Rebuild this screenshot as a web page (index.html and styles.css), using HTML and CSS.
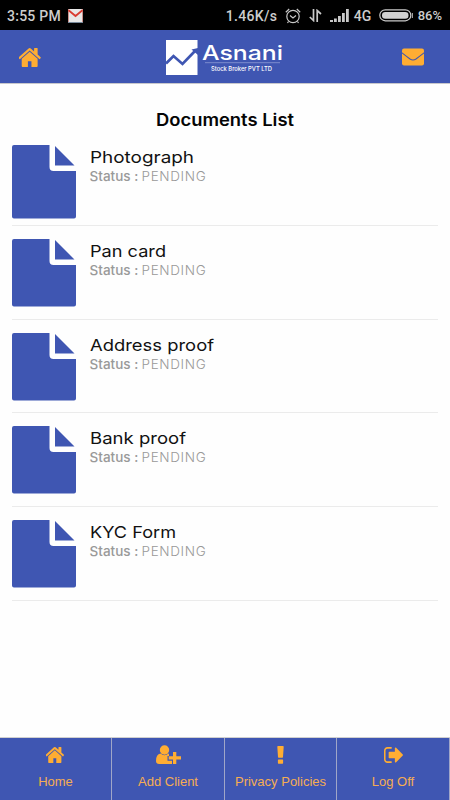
FILE: index.html
```html
<!DOCTYPE html>
<html lang="en">
<head>
<meta charset="utf-8">
<title>Documents List</title>
<link rel="stylesheet" href="styles.css">
</head>
<body>
<svg width="0" height="0" class="defs">
  <symbol id="home" viewBox="60 253 1664 1283" preserveAspectRatio="none"><path d="M1408 992v480q0 26-19 45t-45 19h-384v-384h-256v384h-384q-26 0-45-19t-19-45v-480q0-1 .5-3t.5-3l575-474 575 474q1 2 1 6zm223-69l-62 74q-8 9-21 11h-3q-13 0-21-7l-692-577-692 577q-12 8-24 7-13-2-21-11l-62-74q-8-10-7-23.5t11-21.5l719-599q32-26 76-26t76 26l244 204v-195q0-14 9-23t23-9h192q14 0 23 9t9 23v408l219 182q10 8 11 21.5t-7 23.5z"/></symbol>
  <symbol id="file-tall" viewBox="0 0 64 74"><path d="M2 0H37.500V22Q37.500 26 41.500 26H64V71.500Q64 73.500 62 73.500H2Q0 73.500 0 71.500V2Q0 0 2 0ZM43 1L62.500 20.500H43Z"/></symbol>
  <symbol id="file" viewBox="0 0 64 68"><path d="M2 0H37.500V22Q37.500 26 41.500 26H64V65.500Q64 67.500 62 67.500H2Q0 67.500 0 65.500V2Q0 0 2 0ZM43 1L62.500 20.500H43Z"/></symbol>
</svg>
<div class="status">
  <span class="time">3:55 PM</span>
  <svg class="gmail" width="15" height="14" viewBox="0 0 15 14"><path fill="#e8e8e8" d="M0 0h15v14H0z"/><path d="M.5 0v13M14.500 0v13" stroke="#c98f8b"/><path d="M.5 1.200 7.500 7l7-5.800" fill="none" stroke="#d93c31" stroke-width="1.900"/><path d="M0 13.500h15" stroke="#789"/></svg>
  <span class="speed">1.46K/s</span>
  <svg class="alarm" width="16" height="16" viewBox="0 0 16 16" fill="none" stroke="#c9c9c9" stroke-width="1.200"><circle cx="8" cy="8.500" r="6.200"/><path d="M.8 4.200 4.200 1M15.200 4.200 11.800 1M5 7.500l3 2.500 3-2.500M3.500 13.500 2.500 15M12.500 13.500l1 1.500"/></svg>
  <svg class="arrows" width="13" height="13" viewBox="0 0 13 13" fill="none" stroke="#c9c9c9" stroke-width="1.700"><path d="M4.500 0v11.500L.8 8M8.200 13V1.500L12 5"/></svg>
  <svg class="signal" width="19" height="13" viewBox="0 0 19 13" fill="#c9c9c9"><path d="M0 11h3v2H0zM4 9.500h2.800V13H4zM8 7h2.800v6H8zM12 4h2.800v9H12zM16 0h2.800v13H16z"/></svg>
  <span class="net">4G</span>
  <svg class="battery" width="34" height="13" viewBox="0 0 34 13"><rect x=".8" y=".8" width="31" height="11" rx="5.500" fill="none" stroke="#c9c9c9" stroke-width="1.200"/><path d="M33.300 4v5" stroke="#c9c9c9"/><rect x="3" y="3" width="26.500" height="6.700" rx="3.300" fill="#d2d2d2"/></svg>
  <span class="pct">86%</span>
</div>
<header>
  <svg class="head-home" width="23" height="19"><use href="#home"/></svg>
  <svg class="logo" width="120" height="36" viewBox="0 0 120 36">
    <path fill="#fff" d="M0 0h31.500v35H0z"/>
    <path d="M0 23.500 7.500 16l9 8L29 11" fill="none" stroke="#3f56b2" stroke-width="2.700"/>
    <path fill="#3f56b2" d="M25.500 9.500 32 8v7z"/>
    <text class="brand" x="36" y="19.500" textLength="81" lengthAdjust="spacingAndGlyphs">Asnani</text>
    <path d="M39 22.700h75" stroke="#97a3da" stroke-width=".7"/>
    <text class="tagline" x="45" y="30.500" textLength="61" lengthAdjust="spacingAndGlyphs">Stock Broker PVT LTD</text>
  </svg>
  <svg class="mail" width="22" height="18" viewBox="0 0 22 18"><rect y=".5" width="22" height="17" rx="2" fill="#ffad33"/><path d="M-.5 4.500Q4 8 8 11q3 2 6 0 4-3 8.500-6.500" fill="none" stroke="#3f56b2" stroke-width="1.100"/></svg>
</header>
<main>
  <h1><svg width="140" height="26"><text x="0" y="19" textLength="138" lengthAdjust="spacingAndGlyphs">Documents List</text></svg></h1>
  <ul>
    <li><svg class="file tall"><use href="#file-tall"/></svg><div><svg class="name" width="130" height="20"><text x="0" y="16" textLength="104" lengthAdjust="spacingAndGlyphs">Photograph</text></svg><p><b>Status :</b> <span>PENDING</span></p></div></li>
    <li><svg class="file"><use href="#file"/></svg><div><svg class="name" width="130" height="20"><text x="0" y="16" textLength="76" lengthAdjust="spacingAndGlyphs">Pan card</text></svg><p><b>Status :</b> <span>PENDING</span></p></div></li>
    <li><svg class="file"><use href="#file"/></svg><div><svg class="name" width="130" height="20"><text x="0" y="16" textLength="124" lengthAdjust="spacingAndGlyphs">Address proof</text></svg><p><b>Status :</b> <span>PENDING</span></p></div></li>
    <li><svg class="file"><use href="#file"/></svg><div><svg class="name" width="130" height="20"><text x="0" y="16" textLength="96" lengthAdjust="spacingAndGlyphs">Bank proof</text></svg><p><b>Status :</b> <span>PENDING</span></p></div></li>
    <li><svg class="file"><use href="#file"/></svg><div><svg class="name" width="130" height="20"><text x="0" y="16" textLength="86" lengthAdjust="spacingAndGlyphs">KYC Form</text></svg><p><b>Status :</b> <span>PENDING</span></p></div></li>
  </ul>
</main>
<nav>
  <a><svg width="19" height="16"><use href="#home"/></svg><span>Home</span></a>
  <a><svg width="25" height="20" viewBox="0 0 25 20"><circle cx="8.500" cy="5" r="4.700"/><path d="M4.500 8.500Q8.500 12 12.500 8.500L13 9v2h-1.500v4.700H16V19H3Q0 19 0 16 0 9 4.500 8.500ZM17 7h3.300v4.200H25v3.300h-4.700V19H17v-4.500h-4.300v-3.300H17z"/></svg><span>Add Client</span></a>
  <a><svg width="7" height="18" viewBox="0 0 7 18"><path d="M1 0h5q.7 0 .7.700L6 11q0 .7-.7.700H1.700Q1 11.700 1 11L.3.700Q.3 0 1 0zM1.500 13.500h4q.6 0 .6.600v3q0 .7-.6.700h-4q-.6 0-.6-.7v-3q0-.6.6-.6z"/></svg><span>Privacy Policies</span></a>
  <a><svg width="19" height="16" viewBox="64 250 1568 1290" preserveAspectRatio="none"><path d="M704 1440q0 4 1 20t.5 26.500-3 23.500-10 19.500-20.500 6.500h-320q-119 0-203.500-84.500t-84.500-203.500v-704q0-119 84.500-203.500t203.500-84.500h320q13 0 22.500 9.500t9.500 22.500q0 4 1 20t.5 26.500-3 23.500-10 19.500-20.500 6.500h-320q-66 0-113 47t-47 113v704q0 66 47 113t113 47h312l11.500 1 11.500 3 8 5.500 7 9 2 13.500zm928-544q0 26-19 45l-544 544q-19 19-45 19t-45-19-19-45v-288h-448q-26 0-45-19t-19-45v-384q0-26 19-45t45-19h448v-288q0-26 19-45t45-19 45 19l544 544q19 19 19 45z"/></svg><span>Log Off</span></a>
</nav>
</body>
</html>
```
FILE: styles.css
```css
* { box-sizing: border-box; }
body {
  margin: 0;
  width: 450px;
  height: 800px;
  display: flex;
  flex-direction: column;
  overflow: hidden;
  background: #fefefe;
  font-family: Inter, sans-serif;
}
svg { display: block; flex: none; }
.defs { display: none; }
.status {
  height: 30px;
  background: #000;
  color: #cdcdcd;
  display: flex;
  align-items: center;
  padding: 1px 8px 0 7px;
  font: 500 14px Roboto, sans-serif;
  white-space: nowrap;
}
.time { width: 61px; letter-spacing: .25px; }
.speed { margin-left: 143px; width: 59px; letter-spacing: .3px; }
.arrows { margin-left: 8px; }
.signal { margin-left: 8px; }
.net { margin-left: 5px; width: 25px; }
.pct { margin-left: 5px; font-size: 13px; }
header {
  height: 54px;
  background: #3f56b2;
  border-bottom: 1px solid #c8c8cc;
  display: flex;
  align-items: flex-start;
}
.head-home { margin: 18px 0 0 19px; fill: #ffad33; }
.logo { margin: 10px 0 0 124px; overflow: visible; }
.brand { font: 500 20px Inter, sans-serif; fill: #fff; }
.tagline { font: 500 6.5px Inter, sans-serif; fill: #fff; }
.mail { margin: 18px 0 0 116px; }
main { flex: 1; }
h1 { margin: 23px 0 0 156px; height: 25px; }
h1 text { font: 600 17px Inter, sans-serif; fill: #050505; }
ul { list-style: none; margin: 0; padding: 0 12px; }
li {
  height: 93.8px;
  border-bottom: 1px solid #ebebeb;
  display: flex;
  padding-top: 13px;
}
.file { width: 64px; height: 68px; fill: #3f56b2; margin-right: 13.5px; }
.tall { height: 74px; }
.name text { font: 400 16.5px Inter, sans-serif; fill: #111; }
.name { margin-top: 2px; overflow: visible; }
p {
  margin: -1px 0 0;
  display: flex;
  gap: 4px;
  font-size: 13.5px;
  line-height: 20px;
  color: #999;
}
p b { font-weight: 500; width: 48px; white-space: nowrap; }
p span { font-weight: 300; letter-spacing: .65px; }
nav {
  height: 63px;
  border-top: 1px solid #d0d0d0;
  display: grid;
  grid-template-columns: 112px 113px 112px 113px;
  background: #3f56b2;
}
nav a {
  border-right: 1px solid #a0a6c8;
  display: grid;
  grid-template-rows: 34px 20px;
  justify-items: center;
  align-items: center;
  fill: #ffad33;
  color: #f5ad52;
  font: 13px/20px "Liberation Sans", sans-serif;
}
nav span { white-space: nowrap; }
```
